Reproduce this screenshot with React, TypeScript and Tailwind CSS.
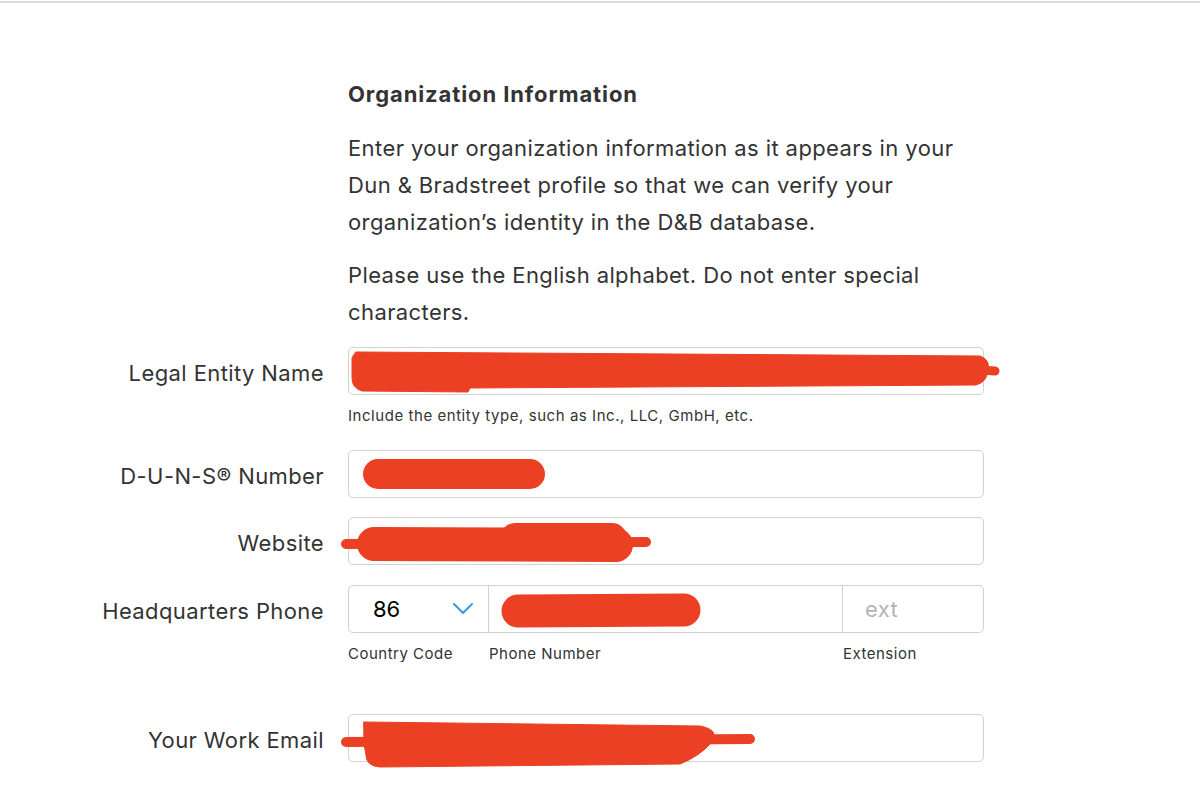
import React from "react";

type RowProps = {
  label?: string;
  children: React.ReactNode;
  className?: string;
};

const Row: React.FC<RowProps> = ({ label, children, className }) => {
  return (
    <div className={`grid grid-cols-[324px_636px] gap-x-6 ${className ?? ""}`}>
      <div className="flex h-[48px] items-center justify-end pt-[5px] text-[22px] tracking-[0.4px] text-[#333]">{label}</div>
      <div>{children}</div>
    </div>
  );
};

const Field: React.FC = () => (
  <div className="h-[48px] rounded-[5px] border border-[#d2d2d2] bg-white"></div>
);

const Redactions: React.FC = () => (
  <svg className="pointer-events-none absolute left-0 top-0" width="1200" height="794" viewBox="0 0 1200 794">
    <g fill="#eb4024" stroke="#eb4024" strokeLinecap="round" strokeLinejoin="round">
      {/* legal entity name */}
      <path d="M356,352 L980,356 Q990,360 988,368 Q988,382 976,385 L470,388 L468,392 L362,391 Q352,388 352,378 L352,358 Z" strokeWidth="1" />
      <path d="M980,370 L995,371" strokeWidth="9" fill="none" />
      {/* duns */}
      <path d="M378,474 L530,474" strokeWidth="30" fill="none" />
      {/* website */}
      <path d="M374,544 L616,545" strokeWidth="34" fill="none" />
      <path d="M515,538 L612,538" strokeWidth="30" fill="none" />
      <path d="M346,544 L646,542" strokeWidth="10" fill="none" />
      {/* phone */}
      <path d="M518,611 L684,610" strokeWidth="33" fill="none" />
      {/* email */}
      <path d="M364,722 L700,726 Q720,730 712,742 Q700,756 680,764 L380,767 Q366,766 366,755 L364,744 Z" strokeWidth="1" />
      <path d="M346,742 L750,739" strokeWidth="10" fill="none" />
    </g>
  </svg>
);

const App: React.FC = () => {
  return (
    <div className="relative h-[794px] w-[1200px] overflow-hidden bg-white font-['Inter',sans-serif] text-[#333]">
      <div className="mt-px h-[2px] bg-[#dcdcdc]"></div>

      <div className="ml-[348px] w-[640px]">
        <div className="mt-[77px] text-[22px] font-bold leading-[28px] tracking-[0.9px]">Organization Information</div>
        <p className="mt-[22px] text-[22px] leading-[37px] tracking-[0.4px]">
          Enter your organization information as it appears in your Dun &amp; Bradstreet profile so that we can verify your
          organization’s identity in the D&amp;B database.
        </p>
        <p className="mt-4 w-[620px] text-[22px] leading-[37px] tracking-[0.4px]">
          Please use the English alphabet. Do not enter special characters.
        </p>
      </div>

      <Row label="Legal Entity Name" className="mt-4">
        <Field />
        <div className="mt-[11px] text-[15px] leading-5 tracking-[0.55px]">Include the entity type, such as Inc., LLC, GmbH, etc.</div>
      </Row>

      <Row label="D-U-N-S® Number" className="mt-6">
        <Field />
      </Row>

      <Row label="Website" className="mt-[19px]">
        <Field />
      </Row>

      <Row label="Headquarters Phone" className="mt-5">
        <div className="flex h-[48px] rounded-[5px] border border-[#d2d2d2]">
          <div className="flex w-[140px] items-center justify-between border-r border-[#d2d2d2] pl-6 pr-[14px] text-[22px] text-black">
            <span>86</span>
            <svg width="22" height="14" viewBox="0 0 22 14" fill="none">
              <path d="M2,2 L11,11 L20,2" stroke="#3a9ad9" strokeWidth="2" strokeLinecap="round" strokeLinejoin="round" />
            </svg>
          </div>
          <div className="flex-1 border-r border-[#d2d2d2]"></div>
          <div className="flex w-[140px] items-center pl-[22px] text-[22px] tracking-[0.4px] text-[#b4b4b4]">ext</div>
        </div>
        <div className="mt-[11px] flex text-[15px] leading-5 tracking-[0.5px]">
          <div className="w-[141px]">Country Code</div>
          <div className="w-[354px]">Phone Number</div>
          <div>Extension</div>
        </div>
      </Row>

      <Row label="Your Work Email" className="mt-[50px]">
        <Field />
      </Row>

      <Redactions />
    </div>
  );
};

export default App;
